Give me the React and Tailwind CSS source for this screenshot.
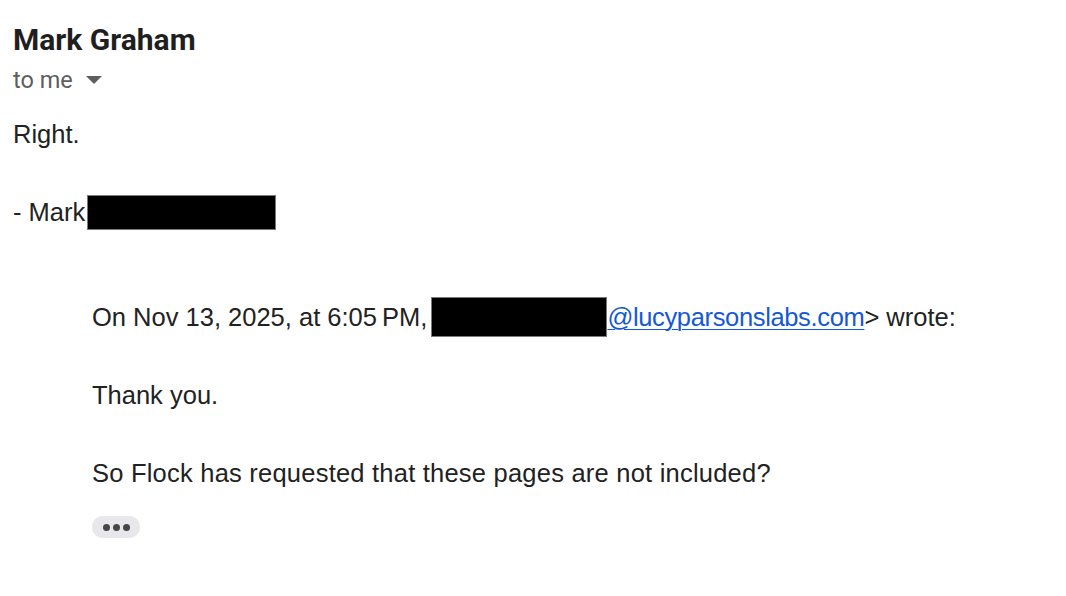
import React from "react";

const Redacted = ({ className }) => (
  <span className={`inline-block align-middle bg-black border border-[#7a7a7a] ${className}`} />
);

const App = () => {
  return (
    <main className="w-[1066px] h-[596px] bg-white overflow-hidden text-[#222222]">
      <header className="pl-[13px] pt-[22px]">
        <h1 className="font-['Roboto',sans-serif] font-bold text-[30px] leading-[36px] text-[#1f1f1f]">
          Mark Graham
        </h1>
        <div className="flex items-center gap-[13px] mt-[7px] font-['Roboto',sans-serif] text-[23.5px] leading-[30px] text-[#5e5e5e]">
          <span>to me</span>
          <svg width="16" height="8" viewBox="0 0 16 8">
            <path d="M0 0 L16 0 L8 8 Z" fill="#5e5e5e" />
          </svg>
        </div>
      </header>

      <section className="pl-[13px] mt-[20px] font-['Liberation_Sans',Arial,sans-serif] text-[25.5px] leading-[39px]">
        <p>Right.</p>
        <p className="h-[39px]" />
        <p className="flex items-center">
          <span>- Mark</span>
          <Redacted className="ml-[2px] w-[189px] h-[35px]" />
        </p>

        <div className="ml-[79px] mt-[65px]">
          <p className="flex items-center whitespace-nowrap">
            <span>On Nov 13, 2025, at 6:05&#8239;PM,</span>
            <Redacted className="ml-[4px] w-[176px] h-[40px]" />
            <a href="#" className="text-[#1558d6] underline underline-offset-[3px] decoration-1 tracking-[-0.35px]">
              @lucyparsonslabs.com
            </a>
            <span>&gt; wrote:</span>
          </p>
          <p className="h-[39px]" />
          <p>Thank you.</p>
          <p className="h-[39px]" />
          <p className="tracking-[0.22px]">So Flock has requested that these pages are not included?</p>
          <button className="mt-[23px] flex items-center justify-center gap-[3px] w-[48px] h-[22px] rounded-full bg-[#e8e8ec]">
            <span className="w-[7px] h-[7px] rounded-full bg-[#444746]" />
            <span className="w-[7px] h-[7px] rounded-full bg-[#444746]" />
            <span className="w-[7px] h-[7px] rounded-full bg-[#444746]" />
          </button>
        </div>
      </section>
    </main>
  );
};

export default App;
